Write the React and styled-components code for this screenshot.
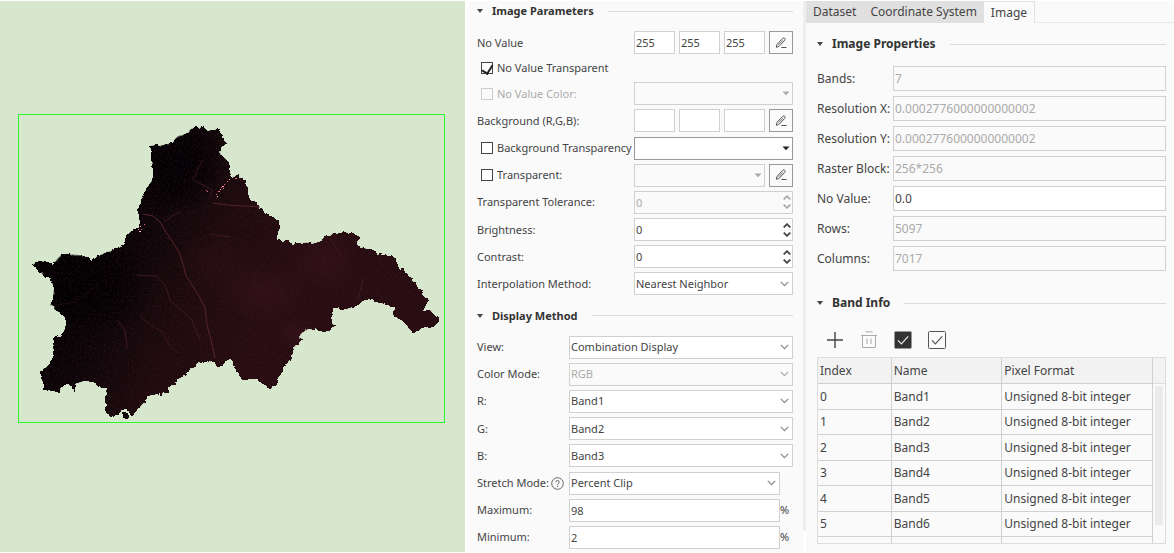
import React, { useState } from "react";
import styled, { createGlobalStyle } from "styled-components";

const OUTLINE =
    "150,146 157,145 159,146 167,144 173,143 175,139 178,136 182,135 188,133 190,129 197,127 199,128 203,126 205,129 213,131 216,128 218,130 220,129 222,137 225,141 228,143 222,147 220,153 224,158 229,162 229,168 231,175 " +
    "234,177 238,175 242,178 246,182 246,187 248,191 248,197 255,203 260,207 263,212 273,217 279,221 280,228 276,237 282,241 288,240 293,244 307,242 315,243 322,241 325,235 329,237 331,234 347,232 355,234 359,239 357,246 " +
    "367,248 375,252 378,254 390,256 397,259 397,263 399,269 403,268 407,276 412,281 416,282 417,287 422,290 423,296 429,298 427,303 423,311 432,310 434,315 439,318 437,325 430,328 422,328 418,331 412,332 407,327 403,321 " +
    "393,316 394,310 397,308 383,304 375,301 368,299 363,301 352,308 345,309 333,308 332,323 335,325 330,332 320,332 316,327 315,331 309,329 302,333 299,337 302,339 294,348 292,358 286,365 278,378 276,384 271,389 262,383 " +
    "255,379 243,380 238,373 235,367 231,359 227,360 223,365 217,366 215,362 200,363 193,368 186,372 186,375 180,378 175,381 175,385 168,387 168,394 163,392 162,395 157,394 147,397 144,404 137,410 132,416 129,410 125,409 118,414 " +
    "112,417 108,414 105,408 106,402 105,397 107,389 97,387 95,381 85,381 77,384 74,392 72,386 66,384 59,392 44,390 43,380 40,371 48,366 53,358 53,342 54,339 62,334 66,327 66,317 59,312 54,309 54,306 50,305 53,300 54,288 " +
    "50,277 43,275 33,264 42,261 53,265 57,259 62,254 80,255 89,258 91,261 102,254 110,251 125,244 126,235 132,230 139,227 139,215 137,211 140,206 142,197 147,188 153,179 153,164 151,160 152,152";

const roads = [
    { d: "M143 214L153 216L160 222L166 232L174 244L180 254L184 268L186 276L198 294L205 308L207 325L211 340L215 358", o: 1 },
    { d: "M136 275L157 276L165 285L170 300L180 309L192 320L200 340", o: 0.6 },
    { d: "M140 316L152 326L163 332L167 342L178 353", o: 0.5 },
    { d: "M117 320L125 330L127 348", o: 0.6 },
    { d: "M203 160L198 168L193 180L201 184L212 190L210 197", o: 0.6 },
    { d: "M164 222L172 216L180 212", o: 0.6 },
    { d: "M213 203L228 205L260 207", o: 0.9 },
    { d: "M209 234L230 237", o: 0.5 },
    { d: "M363 279L358 300", o: 0.5 },
    { d: "M330 238L342 258", o: 0.4 },
    { d: "M54 305L76 302L98 284", o: 0.3 },
];

const hotSpots = [
    [229, 179], [227, 181], [224, 184], [222, 186], [221, 187], [223, 188], [220, 189], [218, 191],
    [216, 194], [217, 196], [206, 190], [235, 178], [140, 226], [138, 229], [141, 229], [139, 231],
    [144, 224], [207, 191],
];

const bands = ["Band1", "Band2", "Band3", "Band4", "Band5", "Band6"];

const imageProps = [
    { label: "Bands:", value: "7", disabled: true },
    { label: "Resolution X:", value: "0.0002776000000000002", disabled: true },
    { label: "Resolution Y:", value: "0.0002776000000000002", disabled: true },
    { label: "Raster Block:", value: "256*256", disabled: true },
    { label: "No Value:", value: "0.0", disabled: false },
    { label: "Rows:", value: "5097", disabled: true },
    { label: "Columns:", value: "7017", disabled: true },
];

const MapView = () => (
    <MapSvg viewBox="0 1 465 551" preserveAspectRatio="xMidYMid meet" role="img" aria-label="Raster map">
        <defs>
            <linearGradient id="land" gradientUnits="userSpaceOnUse" x1="90" y1="220" x2="270" y2="310">
                <stop offset="0" stopColor="#030102" />
                <stop offset="0.3" stopColor="#0d0608" />
                <stop offset="0.62" stopColor="#1e0b0e" />
                <stop offset="1" stopColor="#270d11" />
            </linearGradient>
            <radialGradient id="glow">
                <stop offset="0" stopColor="#36121c" stopOpacity="0.7" />
                <stop offset="1" stopColor="#36121c" stopOpacity="0" />
            </radialGradient>
            <radialGradient id="shade">
                <stop offset="0" stopColor="#010002" stopOpacity="0.9" />
                <stop offset="0.5" stopColor="#010002" stopOpacity="0.7" />
                <stop offset="1" stopColor="#010002" stopOpacity="0" />
            </radialGradient>
            <clipPath id="landClip">
                <polygon points={OUTLINE} />
            </clipPath>
            <filter id="rough" x="-5%" y="-5%" width="110%" height="110%" colorInterpolationFilters="sRGB">
                <feTurbulence type="fractalNoise" baseFrequency="0.2" numOctaves="2" seed="4" />
                <feDisplacementMap in="SourceGraphic" scale="5" xChannelSelector="R" yChannelSelector="G" />
            </filter>
            <filter id="grain" x="0" y="0" width="100%" height="100%" colorInterpolationFilters="sRGB">
                <feTurbulence type="fractalNoise" baseFrequency="0.5" numOctaves="3" seed="9" />
                <feColorMatrix values="0 0 0 0 0.3  0 0 0 0 0.12  0 0 0 0 0.2  1.6 0 0 0 -0.72" />
            </filter>
        </defs>
        <rect x="18.5" y="114.5" width="426" height="308" fill="none" stroke="#2df52d" />
        <g filter="url(#rough)" shapeRendering="crispEdges">
            <polygon points={OUTLINE} fill="url(#land)" />
            <circle cx="125" cy="415" r="3" fill="#140809" />
        </g>
        <g clipPath="url(#landClip)">
            <ellipse cx="172" cy="165" rx="58" ry="50" fill="url(#shade)" />
            <ellipse cx="80" cy="285" rx="75" ry="55" fill="url(#shade)" />
            <ellipse cx="262" cy="292" rx="48" ry="30" fill="url(#glow)" />
            <ellipse cx="325" cy="262" rx="34" ry="30" fill="url(#glow)" />
            <ellipse cx="295" cy="333" rx="22" ry="18" fill="url(#glow)" />
            <ellipse cx="216" cy="262" rx="40" ry="30" fill="url(#glow)" opacity="0.5" />
            <rect x="30" y="120" width="412" height="300" filter="url(#grain)" opacity="0.6" />
            <g fill="none" stroke="#57252f" strokeWidth="1">
                {roads.map((road) => (
                    <path key={road.d} d={road.d} opacity={road.o} />
                ))}
            </g>
            {hotSpots.map(([x, y], i) => (
                <rect key={i} x={x} y={y} width={i % 4 === 3 ? 2 : 1} height="1" fill={i % 3 ? "#e0687f" : "#ffb4c0"} />
            ))}
        </g>
    </MapSvg>
);

const PencilIcon = () => (
    <svg width="12" height="12" viewBox="0 0 12 12" fill="none" stroke="#555" aria-hidden="true">
        <path d="M1.3 10.3L2 7.4L7.9 1.2Q8.9 0.5 9.8 1.4Q10.6 2.4 9.8 3.3L4 9.4Z" />
        <path d="M3.4 7.9L8 3.2" strokeWidth="0.8" />
        <path d="M6.3 10.5H11.5" />
    </svg>
);

const Chevron = () => (
    <svg width="9" height="6" viewBox="0 0 9 6" fill="none" stroke="currentColor" strokeWidth="1.2" aria-hidden="true">
        <path d="M0.8 0.8L4.5 4.6L8.2 0.8" />
    </svg>
);

const Caret = () => (
    <svg width="8" height="5" viewBox="0 0 8 5" fill="currentColor" aria-hidden="true">
        <path d="M0.5 0.5H7.5L4 4.3Z" />
    </svg>
);

const Dropdown = ({ id, value, caret, dark, disabled, label }) => (
    <SelectWrap $dark={dark} $caret={caret} $disabled={disabled}>
        <Select id={id} aria-label={label} $dark={dark} disabled={disabled} defaultValue={value}>
            <option value={value}>{value}</option>
        </Select>
        <ArrowSlot $caret={caret}>{caret ? <Caret /> : <Chevron />}</ArrowSlot>
    </SelectWrap>
);

const Spinner = ({ id, disabled }) => {
    const [value, setValue] = useState(0);
    return (
        <SpinWrap $disabled={disabled}>
            <Input id={id} value={value} disabled={disabled} onChange={(e) => setValue(e.target.value)} />
            <SpinButtons>
                <StepButton aria-label="Increase" disabled={disabled} onClick={() => setValue(Number(value) + 1)}>
                    <svg width="8" height="5" viewBox="0 0 8 5" fill="none" stroke="currentColor" strokeWidth="1.8">
                        <path d="M0.7 4.4L4 1.2L7.3 4.4" />
                    </svg>
                </StepButton>
                <StepButton aria-label="Decrease" disabled={disabled} onClick={() => setValue(Number(value) - 1)}>
                    <svg width="8" height="5" viewBox="0 0 8 5" fill="none" stroke="currentColor" strokeWidth="1.8">
                        <path d="M0.7 0.6L4 3.8L7.3 0.6" />
                    </svg>
                </StepButton>
            </SpinButtons>
        </SpinWrap>
    );
};

const Rgb = ({ name, value }) => (
    <ControlLine>
        {["R", "G", "B"].map((channel) => (
            <Input key={channel} aria-label={`${name} ${channel}`} defaultValue={value} />
        ))}
        <EditButton aria-label={`Edit ${name}`}>
            <PencilIcon />
        </EditButton>
    </ControlLine>
);

const SectionTitle = ({ children }) => (
    <TitleRow>
        <svg width="6" height="4" viewBox="0 0 6 4" fill="#444" aria-hidden="true">
            <path d="M0 0H6L3 4Z" />
        </svg>
        <h2>{children}</h2>
        <Rule />
    </TitleRow>
);

const App = () => {
    const [tab, setTab] = useState("Image");

    return (
        <Page>
            <GlobalStyle />
            <MapPane>
                <MapView />
            </MapPane>
            <ParamPanel>
                <SectionTitle>Image Parameters</SectionTitle>
                <Fields>
                    <Row>
                        <span>No Value</span>
                        <Rgb name="No value" value="255" />
                    </Row>
                    <CheckRow>
                        <CheckLabel>
                            <CheckBox defaultChecked />
                            No Value Transparent
                        </CheckLabel>
                    </CheckRow>
                    <Row>
                        <CheckLabel $disabled>
                            <CheckBox disabled />
                            No Value Color:
                        </CheckLabel>
                        <Dropdown label="No value color" value="" caret disabled />
                    </Row>
                    <Row>
                        <span>Background (R,G,B):</span>
                        <Rgb name="Background" value="" />
                    </Row>
                    <Row>
                        <CheckLabel>
                            <CheckBox />
                            Background Transparency
                        </CheckLabel>
                        <Dropdown label="Background color" value="" caret dark />
                    </Row>
                    <Row>
                        <CheckLabel>
                            <CheckBox />
                            Transparent:
                        </CheckLabel>
                        <ControlLine>
                            <Dropdown label="Transparent color" value="" caret disabled />
                            <EditButton aria-label="Edit transparent color">
                                <PencilIcon />
                            </EditButton>
                        </ControlLine>
                    </Row>
                    <Row>
                        <label htmlFor="tolerance">Transparent Tolerance:</label>
                        <Spinner id="tolerance" disabled />
                    </Row>
                    <Row>
                        <label htmlFor="brightness">Brightness:</label>
                        <Spinner id="brightness" />
                    </Row>
                    <Row>
                        <label htmlFor="contrast">Contrast:</label>
                        <Spinner id="contrast" />
                    </Row>
                    <Row>
                        <label htmlFor="interpolation">Interpolation Method:</label>
                        <Dropdown id="interpolation" value="Nearest Neighbor" />
                    </Row>
                </Fields>
                <SectionTitle>Display Method</SectionTitle>
                <Fields>
                    <Row $label={92}>
                        <label htmlFor="view">View:</label>
                        <Dropdown id="view" value="Combination Display" />
                    </Row>
                    <Row $label={92}>
                        <label htmlFor="colorMode">Color Mode:</label>
                        <Dropdown id="colorMode" value="RGB" disabled />
                    </Row>
                    {["R", "G", "B"].map((channel, index) => (
                        <Row $label={92} key={channel}>
                            <label htmlFor={`channel${channel}`}>{channel}:</label>
                            <Dropdown id={`channel${channel}`} value={bands[index]} />
                        </Row>
                    ))}
                    <Row $label={92} $unit>
                        <HelpLabel htmlFor="stretch">
                            Stretch Mode:
                            <svg width="13" height="13" viewBox="0 0 13 13" fill="none" stroke="#666" aria-hidden="true">
                                <circle cx="6.5" cy="6.5" r="5.8" />
                                <path d="M4.8 5.2Q4.8 3.5 6.5 3.5Q8.2 3.5 8.2 5Q8.2 5.9 7.2 6.4Q6.5 6.8 6.5 7.8M6.5 8.8V9.9" />
                            </svg>
                        </HelpLabel>
                        <Dropdown id="stretch" value="Percent Clip" />
                    </Row>
                    <Row $label={92} $unit>
                        <label htmlFor="maximum">Maximum:</label>
                        <Input id="maximum" defaultValue="98" />
                        <span>%</span>
                    </Row>
                    <Row $label={92} $unit>
                        <label htmlFor="minimum">Minimum:</label>
                        <Input id="minimum" defaultValue="2" />
                        <span>%</span>
                    </Row>
                </Fields>
            </ParamPanel>
            <Divider />
            <PropPanel>
                <Tabs role="tablist">
                    {["Dataset", "Coordinate System", "Image"].map((name) => (
                        <Tab
                            key={name}
                            role="tab"
                            aria-selected={tab === name}
                            $active={tab === name}
                            onClick={() => setTab(name)}
                        >
                            {name}
                        </Tab>
                    ))}
                    <TabFill />
                </Tabs>
                <PropBody>
                    <SectionTitle>Image Properties</SectionTitle>
                    <PropFields>
                        {imageProps.map((item, index) => (
                            <PropRow key={item.label}>
                                <label htmlFor={`prop${index}`}>{item.label}</label>
                                <Input id={`prop${index}`} $tall defaultValue={item.value} disabled={item.disabled} />
                            </PropRow>
                        ))}
                    </PropFields>
                    <SectionTitle>Band Info</SectionTitle>
                    <Toolbar>
                        <ToolButton aria-label="Add band">
                            <svg width="18" height="18" viewBox="0 0 18 18" stroke="#444" strokeWidth="1.4">
                                <path d="M9 1V17M1 9H17" />
                            </svg>
                        </ToolButton>
                        <ToolButton aria-label="Delete band" disabled>
                            <svg width="18" height="18" viewBox="0 0 18 18" fill="none" stroke="#aaa">
                                <path d="M5.5 0.8H12.5M1 4.5H17M2.5 4.5V16.5H15.5V4.5M7 7.5V13M11 7.5V13" />
                            </svg>
                        </ToolButton>
                        <ToolButton aria-label="Select all">
                            <svg width="18" height="18" viewBox="0 0 18 18" fill="none">
                                <rect x="0.5" y="0.5" width="17" height="17" rx="1" fill="#333" />
                                <path d="M4 9.3L7.4 12.8L14.2 5.3" stroke="#eee" strokeWidth="1.2" />
                            </svg>
                        </ToolButton>
                        <ToolButton aria-label="Invert selection">
                            <svg width="18" height="18" viewBox="0 0 18 18" fill="none" stroke="#555">
                                <rect x="0.5" y="0.5" width="17" height="17" rx="1" />
                                <path d="M4 9.3L7.4 12.8L14.2 5.3" strokeWidth="1.2" />
                            </svg>
                        </ToolButton>
                    </Toolbar>
                    <TableFrame>
                        <BandTable>
                            <thead>
                                <tr>
                                    <th>Index</th>
                                    <th>Name</th>
                                    <th>Pixel Format</th>
                                </tr>
                            </thead>
                            <tbody>
                                {bands.map((band, index) => (
                                    <tr key={band}>
                                        <td>{index}</td>
                                        <td>{band}</td>
                                        <td>Unsigned 8-bit integer</td>
                                    </tr>
                                ))}
                                <tr>
                                    <td />
                                    <td />
                                    <td />
                                </tr>
                            </tbody>
                        </BandTable>
                        <ScrollTrack>
                            <ScrollHead />
                            <ScrollThumb />
                        </ScrollTrack>
                    </TableFrame>
                </PropBody>
            </PropPanel>
        </Page>
    );
};

const GlobalStyle = createGlobalStyle`
    * {
        box-sizing: border-box;
    }
    body {
        margin: 0;
        background: #fff;
        color: #444;
        font: 11px/16px "Noto Sans", sans-serif;
    }
    button, input, select {
        font: inherit;
        color: inherit;
    }
`;

const Page = styled.div`
    display: grid;
    grid-template-columns: minmax(0, 465fr) minmax(0, 338fr) 3px minmax(0, 368fr);
    min-height: 100vh;
    padding: 1px 0;
`;

const MapPane = styled.div`
    display: flex;
    background: #d7e7ce;
`;
const MapSvg = styled.svg`
    display: block;
    width: 100%;
`;

const ParamPanel = styled.section`
    display: flex;
    flex-direction: column;
    margin-left: 3px;
    padding: 0 10px 3px 9px;
    background: #fafafa;
`;

const TitleRow = styled.div`
    display: flex;
    align-items: center;
    height: 20px;
    gap: 9px;

    h2 {
        margin: 0;
        font-size: inherit;
        font-weight: 700;
        color: #333;
    }
`;
const Rule = styled.div`
    flex: 1;
    height: 1px;
    margin-left: 5px;
    background: #dadada;
`;

const Fields = styled.div`
    display: grid;
    flex: 1 0 auto;
    align-content: space-between;
    row-gap: 4px;
    margin: 10px 0;

    &:last-child {
        margin-bottom: 0;
    }
`;
const Row = styled.div`
    display: grid;
    grid-template-columns: ${(props) => props.$label || 157}px minmax(0, 1fr) ${(props) => (props.$unit ? "13px" : "")};
    align-items: center;
    height: 23px;
    white-space: nowrap;
`;
const CheckRow = styled.div`
    display: flex;
    align-items: center;
    height: 20px;
`;
const ControlLine = styled.div`
    display: flex;
    gap: 4px;
    min-width: 0;
`;

const CheckLabel = styled.label`
    display: flex;
    align-items: center;
    gap: 4px;
    padding-left: 4px;
    color: ${(props) => (props.$disabled ? "#aaa" : "#444")};
`;
const HelpLabel = styled.label`
    display: flex;
    align-items: center;
    justify-content: space-between;
    padding-right: 5px;
`;

const CheckBox = styled.input.attrs({ type: "checkbox" })`
    appearance: none;
    display: flex;
    justify-content: center;
    width: 12px;
    height: 12px;
    margin: 0;
    border: 1px solid #444;
    background: #fff;

    &:checked::before {
        content: "";
        width: 5px;
        height: 9px;
        border: solid #222;
        border-width: 0 2px 2px 0;
        transform: rotate(32deg);
    }
    &:disabled {
        border-color: #ccc;
        background: #fafafa;
    }
`;

const Input = styled.input`
    width: 100%;
    min-width: 0;
    height: ${(props) => (props.$tall ? 25 : 23)}px;
    padding: 0 0 0 1px;
    border: 1px solid #d0d0d0;
    border-radius: 0;
    outline: none;
    background: #fff;

    &:disabled {
        background: #fafafa;
        color: #aaa;
    }
`;

const EditButton = styled.button`
    display: grid;
    place-items: center;
    flex: 0 0 24px;
    height: 23px;
    padding: 0;
    border: 1px solid #999;
    background: #fafafa;
`;

const SelectWrap = styled.div`
    position: relative;
    flex: 1;
    min-width: 0;
    color: ${(props) => (props.$dark ? "#222" : props.$caret || props.$disabled ? "#aaa" : "#888")};
`;
const Select = styled.select`
    display: block;
    appearance: none;
    width: 100%;
    height: 23px;
    padding: 0 20px 0 1px;
    border: 1px solid ${(props) => (props.$dark ? "#999" : "#d0d0d0")};
    border-radius: 0;
    background: #fff;
    color: #444;

    &:disabled {
        background: #fafafa;
        color: #aaa;
        opacity: 1;
    }
`;
const ArrowSlot = styled.span`
    position: absolute;
    top: 0;
    right: ${(props) => (props.$caret ? 1 : 3)}px;
    display: grid;
    place-items: center;
    width: 12px;
    height: 23px;
    pointer-events: none;
`;

const SpinWrap = styled.div`
    position: relative;
    color: ${(props) => (props.$disabled ? "#aaa" : "#444")};
`;
const SpinButtons = styled.div`
    position: absolute;
    top: 3px;
    right: 2px;
    display: grid;
    gap: 1px;
`;
const StepButton = styled.button`
    display: grid;
    place-items: center;
    width: 8px;
    height: 8px;
    padding: 0;
    border: 0;
    background: none;
`;

const Divider = styled.div`
    margin-bottom: 21px;
    background: #eee;
`;

const PropPanel = styled.section`
    display: flex;
    flex-direction: column;
    background: #fafafa;
    font-size: 12px;
`;
const Tabs = styled.div`
    display: flex;
    height: 22px;
`;
const Tab = styled.button`
    padding: 0 7px;
    border: solid #e2e2e2;
    border-width: ${(props) => (props.$active ? "1px 1px 0 0" : "0")};
    background: ${(props) => (props.$active ? "#fafafa" : "#e0e0e0")};
    white-space: nowrap;
`;
const TabFill = styled.div`
    flex: 1;
    border-bottom: 1px solid #e8e8e8;
`;
const PropBody = styled.div`
    display: flex;
    flex: 1;
    flex-direction: column;
    padding: 11px 8px 8px 11px;
`;
const PropFields = styled.div`
    display: grid;
    row-gap: 5px;
    margin: 12px 0 22px;
`;
const PropRow = styled.div`
    display: grid;
    grid-template-columns: 76px minmax(0, 1fr);
    align-items: center;
    white-space: nowrap;
`;

const Toolbar = styled.div`
    display: flex;
    gap: 16px;
    padding: 18px 9px 8px;
`;
const ToolButton = styled.button`
    display: grid;
    width: 18px;
    height: 18px;
    padding: 0;
    border: 0;
    background: none;
`;

const TableFrame = styled.div`
    display: flex;
    flex: 1 1 0;
    min-height: 180px;
    overflow: hidden;
    border: 1px solid #ddd;
`;
const BandTable = styled.table`
    flex: 1;
    align-self: flex-start;
    table-layout: fixed;
    border-collapse: separate;
    border-spacing: 0;
    text-align: left;

    th,
    td {
        height: 25px;
        padding: 0 2px;
        border: solid #d0d0d0;
        border-width: 0 1px 1px 0;
        font-weight: 400;
        white-space: nowrap;
    }
    tr:nth-child(odd) td {
        height: 26px;
    }
    th {
        height: 26px;
        background: #f2f2f2;
    }
    th:nth-child(1) {
        width: 22%;
    }
    th:nth-child(2) {
        width: 33%;
    }
`;
const ScrollTrack = styled.div`
    display: flex;
    flex-direction: column;
    align-items: center;
    width: 12px;
`;
const ScrollHead = styled.div`
    width: 100%;
    height: 26px;
    margin-bottom: 2px;
    border-bottom: 1px solid #ddd;
    background: #f2f2f2;
`;
const ScrollThumb = styled.div`
    width: 8px;
    height: 139px;
    background: #ebebeb;
`;

export default App;
